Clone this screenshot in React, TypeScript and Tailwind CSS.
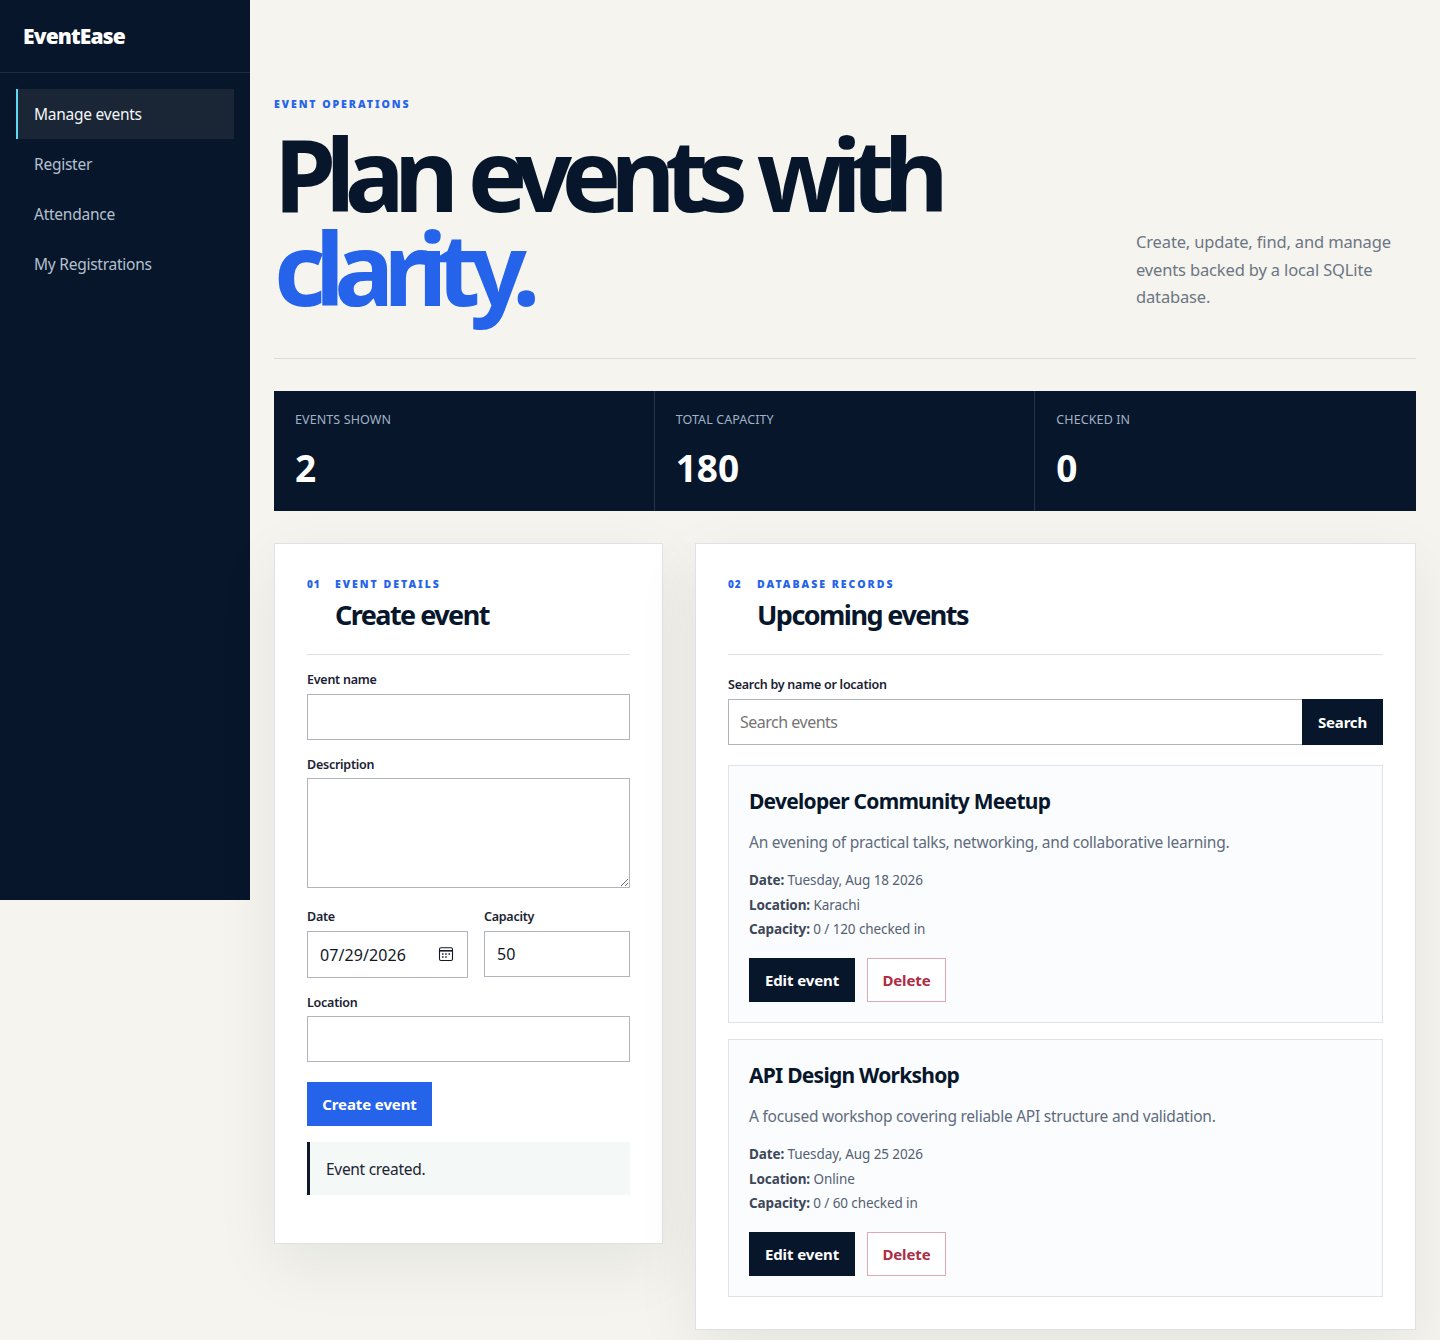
import React from "react";

const navItems = ["Register", "Attendance", "My Registrations"];

function EventCard({ title, desc, date, location, capacity }: { title: string; desc: string; date: string; location: string; capacity: string }) {
  return (
    <article className="border border-[#dfe3e8] bg-[#fafcfe] px-[20px] pt-[19px] pb-[20px] h-[258px]">
      <h3 className="text-[21px] leading-[32px] font-bold text-[#07162b] tracking-[-0.75px]">{title}</h3>
      <p className="mt-[13px] text-[15.5px] leading-[24px] text-[#5f6b7c] tracking-[-0.24px]">{desc}</p>
      <div className="mt-[14px] text-[13.5px] leading-[24.5px] text-[#556071] tracking-[-0.1px]">
        <p><strong className="font-bold text-[#3c4757]">Date:</strong> {date}</p>
        <p><strong className="font-bold text-[#3c4757]">Location:</strong> {location}</p>
        <p><strong className="font-bold text-[#3c4757]">Capacity:</strong> {capacity}</p>
      </div>
      <div className="mt-[16px] flex gap-[12px]">
        <button className="h-[44px] w-[106px] pt-[1px] bg-[#07162b] text-white text-[15px] font-bold tracking-[-0.1px]">Edit event</button>
        <button className="h-[44px] w-[79px] pt-[1px] border border-[#dfa9b3] bg-white text-[#ae2c44] text-[15px] font-bold tracking-[-0.1px]">Delete</button>
      </div>
    </article>
  );
}

function Label({ children }: { children: React.ReactNode }) {
  return <label className="block text-[12.5px] leading-[18px] font-semibold tracking-[-0.25px] text-[#1a2233]">{children}</label>;
}

function SectionHead({ num, eyebrow, title, numWidth }: { num: string; eyebrow: string; title: string; numWidth: string }) {
  return (
    <div className="flex gap-[16px] border-b border-[#dfe1e6] pb-[20px]">
      <span className={"text-[10px] leading-[16px] font-black tracking-[1px] text-[#2563eb] " + numWidth}>{num}</span>
      <div>
        <p className="text-[10.5px] leading-[16px] font-black tracking-[2px] text-[#2563eb]">{eyebrow}</p>
        <h2 className="mt-[4px] text-[27px] leading-[38px] font-bold tracking-[-1.55px] text-[#07162b]">{title}</h2>
      </div>
    </div>
  );
}

const inputCls = "block w-full border border-[#b0b5bd] bg-white px-[12px] text-[16px] text-[#111827] outline-none";
const panelCls = "border border-[#dfe1e6] bg-white px-[32px] pt-[32px] shadow-[0_20px_60px_rgba(7,22,43,0.07)]";

export default function App() {
  return (
    <div className="flex items-start bg-[#f5f4ee] min-h-[1340px] font-['Noto_Sans','Open_Sans',sans-serif]">
      <aside className="w-[250px] h-[900px] shrink-0 bg-[#07162b]">
        <div className="h-[73px] border-b border-[#1f2c40] pl-[23px] pt-[20px]">
          <span className="text-[21px] leading-[32px] font-black tracking-[-0.85px] text-white block">EventEase</span>
        </div>
        <nav className="px-[16px] pt-[16px]">
          <a className="flex items-center h-[50px] pt-[2px] pl-[16px] border-l-2 border-[#5fd8f0] bg-[#1a2535] text-[#f3f5f7] text-[15.5px] tracking-[-0.25px]">Manage events</a>
          {navItems.map((n) => (
            <a key={n} className="flex items-center h-[50px] pt-[2px] pl-[18px] text-[#b4c0ce] text-[15.5px] tracking-[-0.25px]">{n}</a>
          ))}
        </nav>
      </aside>
      <main className="flex-1 min-w-0 px-[24px] pt-[96px] pb-[10px]">
        <header className="flex justify-between items-start border-b border-[#dcdcd8] h-[263px]">
          <div>
            <p className="text-[10.5px] leading-[16px] font-black tracking-[1.95px] text-[#2563eb]">EVENT OPERATIONS</p>
            <h1 className="mt-[14px] text-[100px] leading-[94px] font-bold tracking-[-10.6px] [word-spacing:4px] text-[#07162b]">
              Plan events with<br /><span className="text-[#2563eb]">clarity.</span>
            </h1>
          </div>
          <p className="w-[280px] mt-[132px] text-[16.5px] leading-[27.5px] tracking-[-0.15px] text-[#6c7685]">Create, update, find, and manage events backed by a local SQLite database.</p>
        </header>

        <section className="mt-[32px] grid grid-cols-3 bg-[#07162b] h-[120px]">
          {[["EVENTS SHOWN", "2"], ["TOTAL CAPACITY", "180"], ["CHECKED IN", "0"]].map(([l, v], i) => (
            <div key={l} className={"pl-[21px] pt-[20px] " + (i < 2 ? "border-r border-[#25344a]" : "")}>
              <p className="text-[12.5px] leading-[18px] tracking-[0.1px] text-[#a2b2c6]">{l}</p>
              <p className="mt-[16px] text-[37px] leading-[46px] font-bold text-white">{v}</p>
            </div>
          ))}
        </section>

        <div className="mt-[32px] grid grid-cols-[389px_721px] gap-[32px] items-start">
          <section className={panelCls + " h-[701px]"}>
            <SectionHead num="01" eyebrow="EVENT DETAILS" title="Create event" numWidth="w-[12px]" />
            <div className="mt-[16px]"><Label>Event name</Label><input className={inputCls + " h-[46px] mt-[5px]"} /></div>
            <div className="mt-[16px]"><Label>Description</Label><textarea className={inputCls + " h-[110px] mt-[4px]"} /></div>
            <div className="mt-[20px] grid grid-cols-[161px_146px] gap-[16px] items-start">
              <div><Label>Date</Label>
                <div className="mt-[5px] h-[47px] border border-[#b0b5bd] flex items-center justify-between pl-[12px] pr-[13px] text-[16px] tracking-[0.1px] text-[#111827]">
                  <span>07/29/2026</span>
                  <svg className="-mt-[2px]" width="16" height="16" viewBox="0 0 16 16" fill="none" stroke="#111827" strokeWidth="1.1"><rect x="1.5" y="1.7" width="13" height="12.8" rx="1.5" /><path d="M1.5 4.8h13" strokeWidth="1.6" /><path d="M4 8h1.5M7.2 8h1.5M10.5 8h1.5M4 11h1.5M7.2 11h1.5" strokeWidth="1.4" /></svg>
                </div>
              </div>
              <div><Label>Capacity</Label><input readOnly value="50" className={inputCls + " h-[46px] mt-[5px]"} /></div>
            </div>
            <div className="mt-[16px]"><Label>Location</Label><input className={inputCls + " h-[46px] mt-[4px]"} /></div>
            <button className="mt-[20px] block h-[44px] w-[125px] bg-[#2563eb] text-white text-[15px] font-bold tracking-[-0.1px]">Create event</button>
            <div className="mt-[16px] h-[53px] pt-[2px] border-l-[3px] border-[#0f172a] bg-[#f4f8f7] pl-[16px] flex items-center text-[15.5px] tracking-[-0.3px] text-[#1c2434]">Event created.</div>
          </section>

          <section className={panelCls + " h-[787px]"}>
            <SectionHead num="02" eyebrow="DATABASE RECORDS" title="Upcoming events" numWidth="w-[13px]" />
            <div className="mt-[21px]">
              <Label>Search by name or location</Label>
              <div className="mt-[5px] flex h-[46px]">
                <input placeholder="Search events" className="flex-1 min-w-0 border border-[#b0b5bd] border-r-0 px-[11px] text-[16px] tracking-[-0.5px] outline-none placeholder:text-[#757575]" />
                <button className="w-[81px] bg-[#07162b] text-white text-[15px] font-bold tracking-[-0.2px]">Search</button>
              </div>
            </div>
            <div className="mt-[20px] flex flex-col gap-[16px]">
              <EventCard title="Developer Community Meetup" desc="An evening of practical talks, networking, and collaborative learning." date="Tuesday, Aug 18 2026" location="Karachi" capacity="0 / 120 checked in" />
              <EventCard title="API Design Workshop" desc="A focused workshop covering reliable API structure and validation." date="Tuesday, Aug 25 2026" location="Online" capacity="0 / 60 checked in" />
            </div>
          </section>
        </div>
      </main>
    </div>
  );
}
